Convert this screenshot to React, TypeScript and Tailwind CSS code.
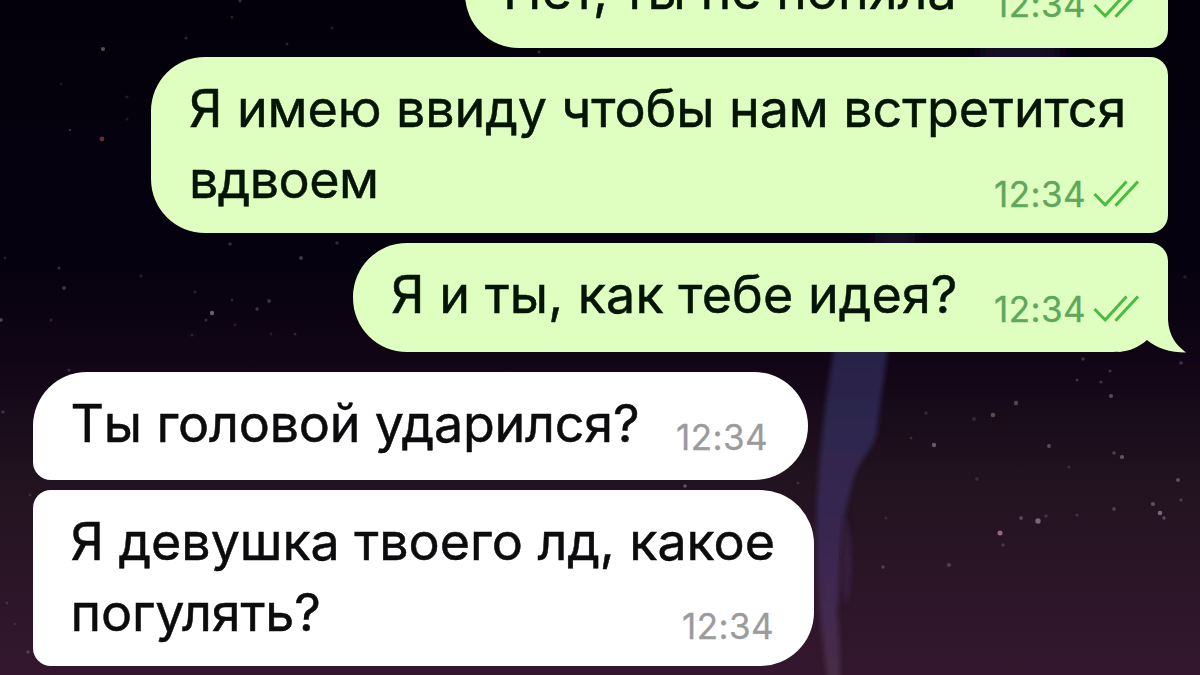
import React from "react";

type Line = { text: string; tracking: string };

const STARS: [number, number, number, string][] = [
  [103, 49, 2, "#6b5a62"], [102, 139, 2.4, "#6e3a36"], [70, 130, 1.3, "#4d3035"], [186, 38, 1.6, "#2e2a3e"],
  [232, 17, 1.6, "#29233a"], [240, 1, 1.6, "#3a3348"], [287, 44, 1.5, "#2c2536"], [332, 28, 1.6, "#27231f"],
  [127, 97, 1.6, "#262137"], [127, 119, 1.5, "#261d31"], [61, 84, 1.4, "#201a2c"], [59, 268, 1.6, "#3d3540"],
  [64, 288, 2, "#453d4a"], [141, 276, 1.8, "#251e35"], [230, 244, 1.7, "#4a3240"], [301, 258, 2, "#464050"],
  [337, 243, 1.8, "#3d2b3c"], [212, 313, 2.2, "#77707f"], [206, 320, 1.5, "#3a3145"], [195, 292, 1.6, "#2e2538"],
  [257, 309, 1.7, "#45404f"], [269, 301, 1.9, "#453c4b"], [1, 320, 1.8, "#5a5068"], [51, 320, 1.5, "#352536"],
  [192, 335, 1.6, "#32253d"], [295, 334, 1.6, "#44222f"], [271, 334, 1.4, "#30202f"], [232, 300, 1.4, "#30263a"],
  [235, 325, 1.4, "#301e30"], [5, 258, 1.4, "#2c2338"], [3, 412, 1.7, "#443950"], [69, 370, 1.6, "#43344c"],
  [28, 652, 1.8, "#5b4360"], [30, 495, 1.4, "#493140"], [7, 603, 1.4, "#4b3348"], [15, 624, 1.3, "#443043"],
  [539, 52, 1.6, "#41303c"], [685, 486, 1.8, "#6e5b74"], [798, 483, 1.6, "#53303e"], [1185, 277, 1.8, "#30202c"],
  [1083, 359, 1.8, "#433a4b"], [1110, 371, 1.6, "#43394c"], [1077, 380, 1.6, "#3d3748"], [1101, 382, 1.6, "#443a4b"],
  [1111, 396, 2.1, "#605364"], [1181, 363, 1.8, "#463c50"], [1016, 403, 2.2, "#62505f"], [993, 415, 2.3, "#6a5752"],
  [974, 419, 2, "#3c2c3a"], [926, 413, 1.7, "#442b30"], [934, 445, 2.2, "#75657a"], [911, 438, 1.5, "#4a2b31"],
  [1049, 446, 1.9, "#685767"], [1114, 453, 1.8, "#594752"], [1122, 457, 2.1, "#786276"], [1178, 480, 2, "#6a5668"],
  [977, 479, 1.8, "#452f42"], [1069, 467, 1.6, "#463139"], [1021, 518, 2, "#624c64"], [1038, 521, 2.7, "#8b7389"],
  [1046, 516, 1.8, "#50374a"], [1000, 533, 2.5, "#aa7993"], [1003, 545, 1.7, "#573a48"], [1114, 509, 1.9, "#5e4259"],
  [1153, 504, 2.1, "#6c566d"], [1160, 513, 2.3, "#87728a"], [1164, 518, 1.8, "#69546b"], [1181, 500, 1.7, "#523e54"],
  [1077, 515, 1.6, "#493348"], [949, 565, 2, "#604557"], [883, 567, 1.7, "#624a5c"], [886, 518, 1.5, "#452c40"],
];

function Sky() {
  return (
    <svg className="absolute inset-0 h-full w-full" viewBox="0 0 1200 675" preserveAspectRatio="none" aria-hidden="true">
      <defs>
        <linearGradient id="night" x1="0" y1="0" x2="0" y2="1">
          <stop offset="0" stopColor="#03000b" />
          <stop offset="0.4" stopColor="#06010f" />
          <stop offset="0.55" stopColor="#120617" />
          <stop offset="0.7" stopColor="#21121f" />
          <stop offset="0.85" stopColor="#2a1527" />
          <stop offset="1" stopColor="#34172e" />
        </linearGradient>
        <linearGradient id="streak" gradientUnits="userSpaceOnUse" x1="0" y1="350" x2="0" y2="675">
          <stop offset="0" stopColor="#272145" />
          <stop offset="0.3" stopColor="#2f2850" />
          <stop offset="0.6" stopColor="#3a2850" />
          <stop offset="0.85" stopColor="#44294d" />
          <stop offset="1" stopColor="#4a2e46" />
        </linearGradient>
        <filter id="soft" x="-30%" y="-10%" width="160%" height="120%">
          <feGaussianBlur stdDeviation="2.6" />
        </filter>
        <filter id="glow" filterUnits="userSpaceOnUse" x="820" y="30" width="300" height="230">
          <feGaussianBlur stdDeviation="9 2" />
        </filter>
      </defs>
      <rect width="1200" height="675" fill="url(#night)" />
      <path d="M980 44H1060V62H980Z M875 228H915V248H875Z" fill="#131028" filter="url(#glow)" />
      <path
        d="M836 335C827 390 819 450 817 505C815 560 819 625 829 685H839C841 655 839 635 837 610C841 590 838 570 842 540C843 515 849 495 855 475C862 455 873 452 877 430C880 400 886 370 889 335Z"
        fill="url(#streak)"
        filter="url(#soft)"
      />
      <path d="M846 515C852 540 855 580 846 606C840 585 842 550 846 515Z" fill="#3a2245" opacity="0.8" filter="url(#soft)" />
      {STARS.map(([x, y, r, c], i) => (
        <circle key={i} cx={x} cy={y} r={r} fill={c} opacity="0.85" />
      ))}
    </svg>
  );
}

function Meta({ sent }: { sent?: boolean }) {
  return (
    <span
      className={`mt-[14.5px] flex shrink-0 text-[35px] leading-[71px] [-webkit-text-stroke:0.3px_currentColor] ${
        sent ? "text-[#5fa75b]" : "text-[#9b9b9d]"
      }`}
    >
      <span className="tracking-[0.4px]">12:34</span>
      {sent && (
        <svg className="mt-[20.5px] mr-[1px] ml-[7px] h-[30px] w-[47px]" viewBox="0 0 47 30" fill="none" stroke="#4abb40" strokeWidth="3">
          <path d="M1.5 15L12.2 26L33.5 2.6" strokeLinejoin="round" />
          <path d="M22.5 26.8L45 2.6" />
        </svg>
      )}
    </span>
  );
}

function Bubble({ lines, sent, className, tail }: { lines: Line[]; sent?: boolean; className: string; tail?: boolean }) {
  const last = lines[lines.length - 1];
  return (
    <div
      className={`relative flex shrink-0 flex-col pt-[16px] text-[52px] leading-[71px] whitespace-nowrap ${
        sent ? "mr-[32px] self-end bg-[#deffbf] pr-[27px] pl-[38px] text-[#041507]" : "ml-[32.5px] self-start bg-white pl-[38px] text-[#0c0c0e]"
      } ${className}`}
    >
      {tail && (
        <svg className="absolute -right-[18px] -bottom-[1px] h-[66px] w-[68px]" viewBox="0 -20 68 66" aria-hidden="true">
          <path d="M-2 -20H50V13C51 29 58 38 68 45.5C52 45.5 38 41 29 33C21 40 11 45 -2 45Z" fill="#deffbf" />
        </svg>
      )}
      {lines.slice(0, -1).map((l) => (
        <p key={l.text} className={`[-webkit-text-stroke:0.5px_currentColor] ${l.tracking}`}>{l.text}</p>
      ))}
      <div className="relative flex h-[71px] items-start justify-between">
        <p className={`[-webkit-text-stroke:0.5px_currentColor] ${last.tracking}`}>{last.text}</p>
        <Meta sent={sent} />
      </div>
    </div>
  );
}

export default function App() {
  return (
    <main className="relative h-[675px] w-[1200px] overflow-hidden bg-[#06010f] font-['Inter','Liberation_Sans',sans-serif]">
      <Sky />
      <div className="relative flex h-full flex-col">
        <div className="mb-[9.5px] flex h-[47.5px] shrink-0 flex-col justify-end self-end overflow-hidden">
          <Bubble
            sent
            className="h-[109px] w-[703px] rounded-l-[54px] rounded-r-[18px]"
            lines={[{ text: "Нет, ты не поняла", tracking: "tracking-[0px]" }]}
          />
        </div>
        <Bubble
          sent
          className="mb-[10px] h-[176px] w-[1017px] rounded-l-[54px] rounded-r-[18px]"
          lines={[
            { text: "Я имею ввиду чтобы нам встретится", tracking: "tracking-[-0.1px]" },
            { text: "вдвоем", tracking: "tracking-[-0.6px]" },
          ]}
        />
        <Bubble
          sent
          tail
          className="mb-[20px] h-[108.5px] w-[815px] rounded-l-[54px] rounded-tr-[18px] rounded-br-[56px]"
          lines={[{ text: "Я и ты, как тебе идея?", tracking: "tracking-[0.06px]" }]}
        />
        <Bubble
          className="mb-[9.5px] h-[108.5px] w-[775.5px] rounded-[54px] rounded-bl-[18px] pr-[40px]"
          lines={[{ text: "Ты головой ударился?", tracking: "tracking-[-0.2px]" }]}
        />
        <Bubble
          className="h-[176px] w-[781.5px] rounded-r-[54px] rounded-l-[18px] pr-[40px]"
          lines={[
            { text: "Я девушка твоего лд, какое", tracking: "tracking-[-0.06px]" },
            { text: "погулять?", tracking: "tracking-[-0.15px]" },
          ]}
        />
      </div>
    </main>
  );
}
